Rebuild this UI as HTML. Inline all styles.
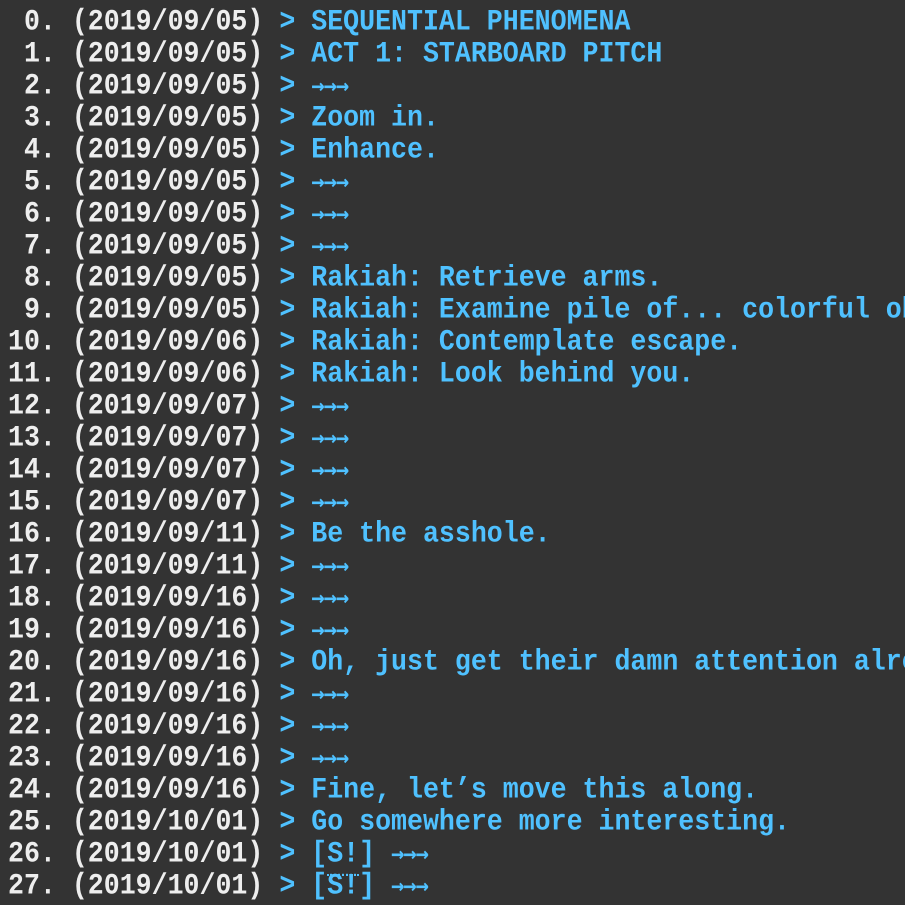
<!DOCTYPE html>
<html><head><meta charset="utf-8"><style>
html,body{margin:0;padding:0;background:#333333;width:905px;height:905px;overflow:hidden}
#c{padding:6px 0 0 8px;font-family:"Liberation Mono",monospace;font-weight:bold;font-size:26.6px;width:897px;overflow:hidden}
#c div{white-space:pre;height:32px;line-height:32px;color:#eeeeee;transform:scaleY(1.1);transform-origin:0 50%}
.b{color:#4fc1ff}
.a{display:inline-block;width:48px;font-size:22px;letter-spacing:-1px;font-family:"DejaVu Sans Mono",monospace}
.u{border-bottom:2px dotted #4fc1ff;padding-bottom:3px}
</style></head><body><div id="c"><div> 0. (2019/09/05) <span class="b">&gt; SEQUENTIAL PHENOMENA</span></div><div> 1. (2019/09/05) <span class="b">&gt; ACT 1: STARBOARD PITCH</span></div><div> 2. (2019/09/05) <span class="b">&gt; <span class="a">→→→</span></span></div><div> 3. (2019/09/05) <span class="b">&gt; Zoom in.</span></div><div> 4. (2019/09/05) <span class="b">&gt; Enhance.</span></div><div> 5. (2019/09/05) <span class="b">&gt; <span class="a">→→→</span></span></div><div> 6. (2019/09/05) <span class="b">&gt; <span class="a">→→→</span></span></div><div> 7. (2019/09/05) <span class="b">&gt; <span class="a">→→→</span></span></div><div> 8. (2019/09/05) <span class="b">&gt; Rakiah: Retrieve arms.</span></div><div> 9. (2019/09/05) <span class="b">&gt; Rakiah: Examine pile of... colorful objects.</span></div><div>10. (2019/09/06) <span class="b">&gt; Rakiah: Contemplate escape.</span></div><div>11. (2019/09/06) <span class="b">&gt; Rakiah: Look behind you.</span></div><div>12. (2019/09/07) <span class="b">&gt; <span class="a">→→→</span></span></div><div>13. (2019/09/07) <span class="b">&gt; <span class="a">→→→</span></span></div><div>14. (2019/09/07) <span class="b">&gt; <span class="a">→→→</span></span></div><div>15. (2019/09/07) <span class="b">&gt; <span class="a">→→→</span></span></div><div>16. (2019/09/11) <span class="b">&gt; Be the asshole.</span></div><div>17. (2019/09/11) <span class="b">&gt; <span class="a">→→→</span></span></div><div>18. (2019/09/16) <span class="b">&gt; <span class="a">→→→</span></span></div><div>19. (2019/09/16) <span class="b">&gt; <span class="a">→→→</span></span></div><div>20. (2019/09/16) <span class="b">&gt; Oh, just get their damn attention already.</span></div><div>21. (2019/09/16) <span class="b">&gt; <span class="a">→→→</span></span></div><div>22. (2019/09/16) <span class="b">&gt; <span class="a">→→→</span></span></div><div>23. (2019/09/16) <span class="b">&gt; <span class="a">→→→</span></span></div><div>24. (2019/09/16) <span class="b">&gt; Fine, let’s move this along.</span></div><div>25. (2019/10/01) <span class="b">&gt; Go somewhere more interesting.</span></div><div>26. (2019/10/01) <span class="b">&gt; [<span class="u">S!</span>] <span class="a">→→→</span></span></div><div>27. (2019/10/01) <span class="b">&gt; [<span class="u">S!</span>] <span class="a">→→→</span></span></div></div></body></html>
